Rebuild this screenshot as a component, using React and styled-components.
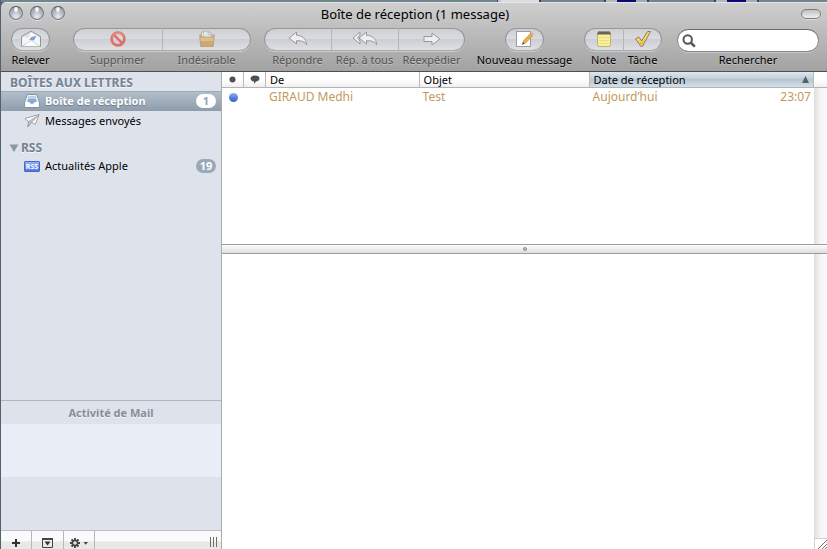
import React from "react";
import styled, { createGlobalStyle, css } from "styled-components";

const GlobalStyle = createGlobalStyle`
  * { box-sizing: border-box; }
  body {
    margin: 0;
    background: #51626f;
    color: #000;
    font-family: "Noto Sans", "Open Sans", sans-serif;
    font-size: 12px;
    line-height: 16px;
  }
  button, input { font: inherit; color: inherit; }
`;

const Desktop = styled.div`
  display: flex;
  flex-direction: column;
  min-height: 100vh;
  padding-left: 1px;
`;

const DesktopStrip = styled.div`
  height: 2px;
  background: linear-gradient(
    90deg,
    #70868f 496px, #3b4652 496px 497px, #b9c0ea 497px 500px, #dcdde2 500px 538px,
    #3b4652 538px 540px, #70868f 540px 603px, #3b4652 603px 605px, #b4b9be 605px 616px,
    #0c0a72 616px 635px, #a4abb1 635px 646px, #3b4652 646px 648px, #70868f 648px 713px,
    #3b4652 713px 715px, #b4b9be 715px 726px, #0c0a72 726px 745px, #a4abb1 745px 756px,
    #3b4652 756px 758px, #70868f 758px
  );
`;

const MailWindow = styled.main`
  display: flex;
  flex: 1;
  flex-direction: column;
  overflow: hidden;
  border-radius: 5px 0 0 0;
`;

const WindowHeader = styled.header`
  border-top: 1px solid #e6e6e6;
  border-bottom: 1px solid #505050;
  background: linear-gradient(#cfcfcf, #a2a2a2);
`;

const TitleBar = styled.div`
  display: grid;
  grid-template-columns: 64px 1fr 64px;
  align-items: center;
  height: 21px;
  padding: 0 6px 0 8px;
`;

const WindowTitle = styled.h1`
  margin: 0;
  font-size: 13px;
  font-weight: 400;
  line-height: 18px;
  text-align: center;
`;

const WindowControls = styled.div`
  display: flex;
  gap: 7px;
  height: 16px;
`;

const WindowControl = styled.button`
  width: 14px;
  height: 14px;
  padding: 0;
  border: 1px solid #747a82;
  border-top-color: #555a62;
  border-radius: 50%;
  background:
    radial-gradient(ellipse at 50% 18%, #f5f6f8 0 12%, transparent 30%),
    radial-gradient(circle at 50% 80%, #e9ecf1, #b7bcc4 45%, #8a9099);
  box-shadow: 0 1px 0 #e0e0e0;
`;

const ToolbarToggle = styled.button`
  justify-self: end;
  width: 20px;
  height: 10px;
  padding: 0;
  border: 1px solid #7b7b7b;
  border-radius: 5px;
  background: linear-gradient(#c0c0c0, #efefef);
  box-shadow: 0 1px 0 #dedede;
`;

const Toolbar = styled.div`
  display: flex;
  align-items: flex-start;
  height: 47px;
  padding: 4px 8px 0 10px;
`;

const ToolGroup = styled.div`
  display: flex;
  flex: none;
  margin-right: ${(p) => p.$after}px;
`;

const ToolFace = styled.span`
  display: flex;
  align-items: center;
  justify-content: center;
  width: ${(p) => p.$width};
  height: 23px;
  border: 1px solid #96979b;
  border-width: 1px 0 1px 1px;
  border-bottom-color: #a9aaad;
  background: linear-gradient(#cfd0d4, #dadbdf 45%, #cdced3 50%, #dfe0e4);
  box-shadow: 0 1px 0 #cbcbcb;

  svg { display: block; margin-bottom: 1px; }
`;

const ToolButton = styled.button`
  display: flex;
  flex-direction: column;
  align-items: center;
  gap: 1px;
  width: ${(p) => p.$width}px;
  padding: 0;
  border: 0;
  background: none;
  color: #000;
  white-space: nowrap;

  &:disabled { color: #535353; }
  &:not(:first-child) ${ToolFace} { border-left-color: #b4b5b9; }
  &:first-child ${ToolFace} {
    border-top-left-radius: 12px;
    border-bottom-left-radius: 12px;
  }
  &:last-child ${ToolFace} {
    border-right-width: 1px;
    border-top-right-radius: 12px;
    border-bottom-right-radius: 12px;
  }
`;

const ToolLabel = styled.span`
  font-size: 11px;
  line-height: 16px;
  text-shadow: 0 1px 0 rgba(255, 255, 255, 0.3);
`;

const SearchField = styled.label`
  display: flex;
  flex: 1;
  flex-direction: column;
  align-items: center;
  min-width: 0;
`;

const SearchBox = styled.span`
  display: flex;
  align-items: center;
  gap: 4px;
  width: 100%;
  height: 23px;
  margin: 1px 0 0;
  padding: 0 10px 0 4px;
  border: 1px solid #8a8a8a;
  border-top-color: #6e6e6e;
  border-radius: 12px;
  background: #fff;
  box-shadow: 0 1px 0 #c6c6c6;
`;

const SearchInput = styled.input`
  flex: 1;
  min-width: 0;
  padding: 0;
  border: 0;
  outline: 0;
  background: none;
`;

const Body = styled.div`
  display: grid;
  flex: 1;
  grid-template-columns: 221px minmax(0, 1fr);
`;

const Sidebar = styled.aside`
  display: flex;
  flex-direction: column;
  border-right: 1px solid #acacac;
  background: #dee3eb;
`;

const MailboxNav = styled.nav`
  flex: 1;
`;

const SectionTitle = styled.h2`
  display: flex;
  align-items: center;
  gap: 2px;
  height: ${(p) => (p.$first ? 19 : 18)}px;
  margin: ${(p) => (p.$first ? 0 : 7)}px 0 0;
  padding: ${(p) => (p.$first ? 3 : 1)}px 8px 0 ${(p) => (p.$first ? 9 : 8)}px;
  color: #748292;
  font-size: 12px;
  font-weight: 700;
  text-shadow: 0 1px 0 #f2f5f9;
`;

const MailboxList = styled.ul`
  margin: 0;
  padding: 0;
  list-style: none;
`;

const Badge = styled.span`
  min-width: 20px;
  padding: 0 3px;
  border-radius: 7px;
  background: #9aa8b8;
  color: #fff;
  font-size: 11px;
  font-weight: 700;
  line-height: 14px;
  text-align: center;
`;

const Mailbox = styled.a`
  display: flex;
  align-items: center;
  gap: 5px;
  height: 20px;
  padding: 0 5px 0 23px;
  color: #000;
  font-size: 11px;
  text-decoration: none;

  ${(p) =>
    p.$selected &&
    css`
      background: linear-gradient(#b4bfca, #8e9cad);
      box-shadow: inset 0 1px 0 #9caab6;
      color: #fff;
      font-weight: 700;
      text-shadow: 0 1px 1px #66788a;

      ${Badge} {
        background: #fff;
        color: #96a3b2;
        text-shadow: none;
      }
    `}
`;

const MailboxName = styled.span`
  flex: 1;
`;

const Activity = styled.section`
  border-top: 1px solid #b1b4b8;
`;

const ActivityTitle = styled.h2`
  height: 23px;
  margin: 0;
  color: #858d97;
  font-size: 11px;
  font-weight: 700;
  line-height: 24px;
  text-align: center;
  text-shadow: 0 1px 0 #f2f5f9;
`;

const ActivityBand = styled.div`
  height: 53px;
  background: ${(p) => (p.$light ? "#e8edf6" : "#dee3eb")};
`;

const BottomBar = styled.div`
  display: flex;
  height: 19px;
  border-top: 1px solid #bdbfc2;
  background: linear-gradient(#fafafa 0 10px, #e8e8e8 11px);
`;

const BottomButton = styled.button`
  display: flex;
  align-items: center;
  justify-content: center;
  width: ${(p) => p.$width}px;
  padding: 5px 0 0;
  border: 0;
  border-right: 1px solid #b8b8b8;
  background: none;
  overflow: hidden;
`;

const SidebarGrip = styled.div`
  width: 7px;
  height: 10px;
  margin: 6px 4px 0 auto;
  background: repeating-linear-gradient(90deg, #6e6e6e 0 1px, transparent 1px 3px);
`;

const Content = styled.section`
  display: flex;
  flex-direction: column;
  background: #fff;
`;

const ListPane = styled.div`
  display: flex;
  height: 172px;
`;

const ReadingPane = styled.div`
  display: flex;
  flex: 1;
`;

const Preview = styled.article`
  flex: 1;
`;

const ScrollColumn = styled.div`
  display: flex;
  flex-direction: column;
  width: 13px;
`;

const ScrollCap = styled.div`
  height: 16px;
  border-bottom: 1px solid #b4b4b4;
  background: linear-gradient(#fff 50%, #f0f0f0);
`;

const ScrollTrack = styled.div`
  flex: 1;
  background: linear-gradient(90deg, #dedede, #f4f4f4 6px, #fcfcfc);
`;

const ResizeCorner = styled.div`
  display: flex;
  align-items: flex-end;
  justify-content: flex-end;
  height: 11px;
  border-top: 1px solid #d2d2d2;
  border-left: 1px solid #d2d2d2;
`;

const MessageTable = styled.table`
  flex: 1;
  width: 100%;
  height: max-content;
  border-collapse: separate;
  border-spacing: 0;
  table-layout: fixed;
`;

const Column = styled.col`
  width: ${(p) => p.$width};
`;

const HeadCell = styled.th`
  height: 16px;
  padding: 0 4px;
  border-right: 1px solid #b9b9b9;
  border-bottom: 1px solid #b4b4b4;
  background: ${(p) =>
    p.$sorted ? "linear-gradient(#dfe7ee, #c2ced9 45%, #b8c6d2 50%, #d2e0e9)" : "linear-gradient(#fff 50%, #f0f0f0)"};
  font-size: 11px;
  font-weight: 400;
  line-height: 14px;
  text-align: left;

  svg { display: block; margin: ${(p) => (p.$icon ? "0 auto" : "0")}; }
`;

const HeadRow = styled.span`
  display: flex;
  align-items: center;
  justify-content: space-between;
`;

const Cell = styled.td`
  height: 18px;
  padding: 0 3px;
  color: #c19a5b;
  line-height: 18px;
  white-space: nowrap;
`;

const UnreadDot = styled.span`
  display: block;
  width: 9px;
  height: 9px;
  margin: 0 auto;
  border-radius: 50%;
  background: linear-gradient(#8eb0ec, #5279dc 60%, #4560c6);
`;

const DateTime = styled.time`
  display: flex;
  justify-content: space-between;
`;

const Splitter = styled.div`
  display: flex;
  align-items: center;
  justify-content: center;
  height: 10px;
  border: 1px solid #9d9d9d;
  border-width: 1px 0;
  background: linear-gradient(#fcfcfc, #dedede);
`;

const SplitterDot = styled.span`
  width: 4px;
  height: 4px;
  border: 1px solid #8e8e8e;
  border-radius: 2px;
  background: #c2c2c2;
`;

const EnvelopeIcon = () => (
  <svg width="22" height="18" viewBox="0 0 22 18">
    <path d="M1.5 6.5 11 1.2 20.5 6.5V16.5H1.5Z" fill="#dfe1e5" stroke="#8f949c" strokeLinejoin="round" />
    <path d="M3 7.5 12 2.5 18.5 7v4L11 14.5 4 11Z" fill="#f8f9fb" />
    <path d="M5 6.8 9.5 4.3M6 8 10 5.8" stroke="#c8ccd3" strokeWidth=".8" />
    <path d="M9 10 11.5 7 16.5 5.8 14 10.5Z" fill="#7ba3d8" />
    <path d="M2 7.3 9 12 2 16ZM20 7.3 13 12 20 16Z" fill="#f4f5f7" />
    <path d="M2 16.2 11 10.5 20 16.2Z" fill="#fff" stroke="#c3c7cd" strokeWidth=".7" />
  </svg>
);

const ForbidIcon = () => (
  <svg width="16" height="16" viewBox="0 0 16 16" fill="none">
    <circle cx="8" cy="8" r="6.4" stroke="#de706a" strokeWidth="2.6" />
    <path d="M3.7 3.7 12.3 12.3" stroke="#de706a" strokeWidth="2.6" />
    <path d="M2.2 5.8Q4 1.8 8 1.8T13.8 5.8" stroke="#eda5a1" strokeWidth=".9" />
  </svg>
);

const JunkIcon = () => (
  <svg width="18" height="18" viewBox="0 0 18 18">
    <path d="M3.5 2H11L14 4V10H3.5Z" fill="#eceeed" stroke="#9da3a0" strokeWidth=".8" />
    <path d="M5.5 1.2H10V4.5H13V9H5.5Z" fill="#e0e9ea" stroke="#a2adaa" strokeWidth=".6" />
    <path d="M1.8 7H16.2L15.3 16.5H2.7Z" fill="#cfa870" stroke="#b69568" strokeWidth=".7" />
    <path d="M2 7 .8 5 3.5 4.3V7ZM16 7 17.2 5 14.5 4.3V7Z" fill="#c7a273" />
    <path d="M2.2 7.4H15.8L15.5 11H2.5Z" fill="#dcbd8f" />
  </svg>
);

const ReplyIcon = () => (
  <svg width="20" height="16" viewBox="0 0 20 16">
    <path d="M1 7 8.5 1V4.3C14 4.5 18 7 18.8 14 16.5 10.5 14 9.7 8.5 9.7V13Z" fill="#eeeeef" stroke="#97989c" strokeLinejoin="round" />
  </svg>
);

const ReplyAllIcon = () => (
  <svg width="26" height="16" viewBox="0 0 26 16" fill="#eeeeef" stroke="#97989c" strokeLinejoin="round">
    <path d="M1 7 8 1V4L5.7 7 8 10V13Z" />
    <path d="M7 7 14.5 1V4.3C20 4.5 24 7 24.8 14 22.5 10.5 20 9.7 14.5 9.7V13Z" />
  </svg>
);

const ForwardIcon = () => (
  <svg width="18" height="16" viewBox="0 0 18 16">
    <path d="M1 5.5H9V2L16.8 8 9 14V10.5H1Z" fill="#eeeeef" stroke="#97989c" strokeLinejoin="round" />
  </svg>
);

const ComposeIcon = () => (
  <svg width="20" height="18" viewBox="0 0 20 18">
    <rect x="1.5" y="1.5" width="14" height="15" fill="#fff" stroke="#9a9da3" />
    <path d="M7.3 14.5 8.5 10.8 15.2 3.8 17.6 5.8 10.9 12.8Z" fill="#f3b23f" stroke="#b67a2a" strokeWidth=".6" />
    <path d="M15.2 3.8 16.8 2 19 4.1 17.6 5.8Z" fill="#efa09e" />
    <path d="M7.3 14.5 8 12.3 9.5 13.5Z" fill="#343434" />
  </svg>
);

const NoteIcon = () => (
  <svg width="16" height="18" viewBox="0 0 16 18">
    <rect x="1.5" y="2" width="13" height="14.5" rx="1.5" fill="#fbee96" stroke="#bdb37a" />
    <path d="M2.2 1.5H13.8L15 4.5H1Z" fill="#666358" />
    <path d="M2.5 7.5H13.5M2.5 10.5H13.5M2.5 13.5H13.5" stroke="#e6da85" strokeWidth=".8" />
  </svg>
);

const CheckIcon = () => (
  <svg width="18" height="18" viewBox="0 0 18 18">
    <path d="M1.5 8.8 4.8 7 7.6 11 13.6 1.5H16.5L8.6 16.3H6.8Z" fill="#fbd662" stroke="#85806f" strokeLinejoin="round" />
    <path d="M4 9.4 7.5 13 11 8.4 8.1 15.2H7.2Z" fill="#f5ad40" />
  </svg>
);

const SearchIcon = () => (
  <svg width="14" height="14" viewBox="0 0 14 14" fill="none" stroke="#555">
    <circle cx="5.7" cy="5.5" r="4.2" strokeWidth="2" />
    <path d="M8.8 8.7 12.8 12.7" strokeWidth="2.6" />
  </svg>
);

const InboxIcon = () => (
  <svg width="16" height="16" viewBox="0 0 16 16">
    <path d="M3.3 1.5H12.7L15.3 9V14.5H.7V9Z" fill="#f3f6f9" stroke="#8090a1" strokeLinejoin="round" />
    <path d="M4.6 3H11.4L12.8 9H10.5Q10 11 8 11T5.5 9H3.2Z" fill="#86abd2" />
    <path d="M4.6 3H11.4L12 6H4Z" fill="#bfd1e3" />
    <path d="M1.3 9.6H4.8Q5.5 12 8 12T11.2 9.6H14.7V14H1.3Z" fill="#fff" />
  </svg>
);

const SentIcon = () => (
  <svg width="16" height="16" viewBox="0 0 16 16" strokeLinejoin="round">
    <path d="M.8 5.5 15.2 1.5 11.3 11.5 7.5 9.2 4 13.8 4.6 8.6Z" fill="#fafafa" stroke="#a0a2a5" />
    <path d="M4.6 8.6 14.6 2.2 7.5 9.2 4 13.8Z" fill="#c0c2c5" stroke="#8f9194" strokeWidth=".6" />
  </svg>
);

const RssBadge = styled.span`
  width: 16px;
  height: 11px;
  border: 1px solid #4568ce;
  border-radius: 1px;
  background: linear-gradient(#93aef8, #5474e4);
  color: #fff;
  font-size: 7px;
  font-weight: 700;
  line-height: 9px;
  text-align: center;
`;

const Disclosure = () => (
  <svg width="10" height="8" viewBox="0 0 10 8"><path d="M.5.5H9.5L5 8Z" fill="#8b98a6" /></svg>
);

const DotIcon = () => (
  <svg width="7" height="7" viewBox="0 0 7 7"><circle cx="3.5" cy="3.5" r="3" fill="#505050" /></svg>
);

const BubbleIcon = () => (
  <svg width="10" height="9" viewBox="0 0 10 9">
    <path d="M5 .5C8 .5 9.5 1.8 9.5 3.5S8 6.3 6 6.5L4 9V6.5C1.8 6.3.5 5 .5 3.5S2 .5 5 .5Z" fill="#505050" />
  </svg>
);

const SortIcon = () => (
  <svg width="7" height="7" viewBox="0 0 7 7"><path d="M3.5 0 7 7H0Z" fill="#58626a" /></svg>
);

const PlusIcon = () => (
  <svg width="8" height="8" viewBox="0 0 8 8"><path d="M4 0V8M0 4H8" stroke="#333" strokeWidth="2" /></svg>
);

const PanelIcon = () => (
  <svg width="11" height="10" viewBox="0 0 11 10">
    <path d="M.5 1H10.5V9.5H.5Z" fill="none" stroke="#444" />
    <path d="M0 1H11" stroke="#444" strokeWidth="2" />
    <path d="M2.5 3.5H8.5L5.5 7.5Z" fill="#333" />
  </svg>
);

const GearIcon = () => (
  <svg width="18" height="10" viewBox="0 0 18 10">
    <circle cx="5" cy="5" r="2.6" fill="none" stroke="#444" strokeWidth="1.6" />
    <path d="M5 0V2M5 8V10M0 5H2M8 5H10M1.5 1.5 3 3M7 7 8.5 8.5M8.5 1.5 7 3M3 7 1.5 8.5" stroke="#444" strokeWidth="1.8" />
    <path d="M13.5 4H18L15.7 6.8Z" fill="#444" />
  </svg>
);

const GripIcon = () => (
  <svg width="9" height="9" viewBox="0 0 9 9"><path d="M0 9 9 0M4 9 9 4M7 9 9 7" stroke="#777" /></svg>
);

const toolGroups = [
  { after: 23, tools: [{ label: "Relever", width: 39, icon: <EnvelopeIcon /> }] },
  {
    after: 13,
    tools: [
      { label: "Supprimer", width: 89, icon: <ForbidIcon />, disabled: true },
      { label: "Indésirable", width: 89, icon: <JunkIcon />, disabled: true },
    ],
  },
  {
    after: 10,
    tools: [
      { label: "Répondre", width: 67, icon: <ReplyIcon />, disabled: true },
      { label: "Rép. à tous", width: 67, icon: <ReplyAllIcon />, disabled: true },
      { label: "Réexpédier", width: 67, icon: <ForwardIcon />, disabled: true },
    ],
  },
  { after: 10, tools: [{ label: "Nouveau message", width: 99, face: "39px", icon: <ComposeIcon /> }] },
  {
    after: 15,
    tools: [
      { label: "Note", width: 39, icon: <NoteIcon /> },
      { label: "Tâche", width: 39, icon: <CheckIcon /> },
    ],
  },
];

export default function App() {
  return (
    <Desktop>
      <GlobalStyle />
      <DesktopStrip />
      <MailWindow>
        <WindowHeader>
          <TitleBar>
            <WindowControls>
              <WindowControl aria-label="Fermer" />
              <WindowControl aria-label="Réduire" />
              <WindowControl aria-label="Agrandir" />
            </WindowControls>
            <WindowTitle>Boîte de réception (1 message)</WindowTitle>
            <ToolbarToggle aria-label="Barre d’outils" />
          </TitleBar>
          <Toolbar>
            {toolGroups.map((group) => (
              <ToolGroup key={group.tools[0].label} $after={group.after}>
                {group.tools.map((tool) => (
                  <ToolButton key={tool.label} $width={tool.width} disabled={tool.disabled}>
                    <ToolFace $width={tool.face || "100%"}>{tool.icon}</ToolFace>
                    <ToolLabel>{tool.label}</ToolLabel>
                  </ToolButton>
                ))}
              </ToolGroup>
            ))}
            <SearchField>
              <SearchBox>
                <SearchIcon />
                <SearchInput type="text" />
              </SearchBox>
              <ToolLabel>Rechercher</ToolLabel>
            </SearchField>
          </Toolbar>
        </WindowHeader>
        <Body>
          <Sidebar>
            <MailboxNav>
              <SectionTitle $first>BOÎTES AUX LETTRES</SectionTitle>
              <MailboxList>
                <li>
                  <Mailbox href="#inbox" $selected>
                    <InboxIcon />
                    <MailboxName>Boîte de réception</MailboxName>
                    <Badge>1</Badge>
                  </Mailbox>
                </li>
                <li>
                  <Mailbox href="#sent">
                    <SentIcon />
                    <MailboxName>Messages envoyés</MailboxName>
                  </Mailbox>
                </li>
              </MailboxList>
              <SectionTitle>
                <Disclosure />
                RSS
              </SectionTitle>
              <MailboxList>
                <li>
                  <Mailbox href="#apple">
                    <RssBadge>RSS</RssBadge>
                    <MailboxName>Actualités Apple</MailboxName>
                    <Badge>19</Badge>
                  </Mailbox>
                </li>
              </MailboxList>
            </MailboxNav>
            <Activity>
              <ActivityTitle>Activité de Mail</ActivityTitle>
              <ActivityBand $light />
              <ActivityBand />
            </Activity>
            <BottomBar>
              <BottomButton $width={31} aria-label="Ajouter"><PlusIcon /></BottomButton>
              <BottomButton $width={32} aria-label="Afficher l’activité"><PanelIcon /></BottomButton>
              <BottomButton $width={31} aria-label="Actions"><GearIcon /></BottomButton>
              <SidebarGrip />
            </BottomBar>
          </Sidebar>
          <Content>
            <ListPane>
              <MessageTable>
                <colgroup>
                  <Column $width="22px" />
                  <Column $width="22px" />
                  <Column $width="26%" />
                  <Column $width="170px" />
                  <Column $width="38%" />
                </colgroup>
                <thead>
                  <tr>
                    <HeadCell $icon aria-label="Non lu"><DotIcon /></HeadCell>
                    <HeadCell $icon aria-label="Discussion"><BubbleIcon /></HeadCell>
                    <HeadCell>De</HeadCell>
                    <HeadCell>Objet</HeadCell>
                    <HeadCell $sorted aria-sort="ascending">
                      <HeadRow>Date de réception<SortIcon /></HeadRow>
                    </HeadCell>
                  </tr>
                </thead>
                <tbody>
                  <tr>
                    <Cell><UnreadDot /></Cell>
                    <Cell />
                    <Cell>GIRAUD Medhi</Cell>
                    <Cell>Test</Cell>
                    <Cell>
                      <DateTime><span>Aujourd’hui</span><span>23:07</span></DateTime>
                    </Cell>
                  </tr>
                </tbody>
              </MessageTable>
              <ScrollColumn>
                <ScrollCap />
                <ScrollTrack />
              </ScrollColumn>
            </ListPane>
            <Splitter><SplitterDot /></Splitter>
            <ReadingPane>
              <Preview />
              <ScrollColumn>
                <ScrollTrack />
                <ResizeCorner><GripIcon /></ResizeCorner>
              </ScrollColumn>
            </ReadingPane>
          </Content>
        </Body>
      </MailWindow>
    </Desktop>
  );
}
